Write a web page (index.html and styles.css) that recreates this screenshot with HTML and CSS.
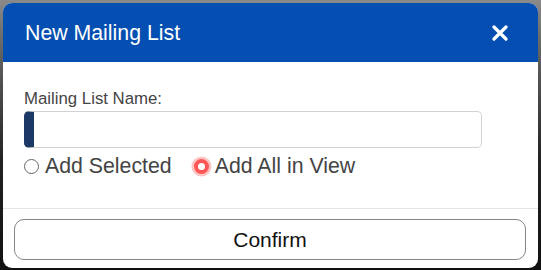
FILE: index.html
```html
<!DOCTYPE html>
<html>
<head>
<meta charset="utf-8">
<link rel="stylesheet" href="styles.css">
</head>
<body>
<div class="dialog">
  <div class="header">
    <span class="title">New Mailing List</span>
    <span class="close"><svg width="16" height="16" viewBox="0 0 16 16"><path d="M2 2 L14 14 M14 2 L2 14" stroke="#fff" stroke-width="3.2" stroke-linecap="round"/></svg></span>
  </div>
  <div class="body">
    <div class="label">Mailing List Name:</div>
    <div class="input"></div>
    <div class="radios">
      <label class="radio"><span class="dot"></span>Add Selected</label>
      <label class="radio checked"><span class="dot"></span>Add All in View</label>
    </div>
  </div>
  <div class="footer">
    <div class="button">Confirm</div>
  </div>
</div>
</body>
</html>
```
FILE: styles.css
```css
html, body { margin: 0; padding: 0; }
body {
  width: 541px;
  height: 270px;
  background: linear-gradient(180deg, #8a8a8a 0px, #6a6a6a 40px, #222 160px, #111 270px);
  padding: 3px 3px 0 3px;
  box-sizing: border-box;
  font-family: "Liberation Sans", Arial, sans-serif;
  overflow: hidden;
}
.dialog {
  width: 535px;
  height: 265px;
  background: #fff;
  border-radius: 9px;
  overflow: hidden;
  display: flex;
  flex-direction: column;
}
.header {
  height: 59px;
  background: #044fb1;
  display: flex;
  align-items: center;
  justify-content: space-between;
  padding: 0 30px 0 22px;
  box-sizing: border-box;
}
.title {
  color: #fff;
  font-size: 21.3px;
  line-height: 24px;
  padding-top: 1px;
}
.close { display: flex; width: 16px; height: 16px; }
.body {
  padding: 27px 0 30px 21px;
  border-bottom: 1px solid #e6e6e6;
}
.label {
  color: #444;
  font-size: 16.8px;
  line-height: 20px;
}
.input {
  margin-top: 2px;
  width: 458px;
  height: 37px;
  box-sizing: border-box;
  border: 1px solid #d2d2d2;
  border-left: 10px solid #1c3966;
  border-radius: 5px;
}
.radios {
  margin-top: 6px;
  display: flex;
  align-items: center;
  gap: 22px;
  height: 24px;
}
.radio {
  display: flex;
  align-items: center;
  color: #444;
  font-size: 21.3px;
  line-height: 24px;
}
.dot {
  width: 15px;
  height: 15px;
  box-sizing: border-box;
  border: 1px solid #666;
  border-radius: 50%;
  margin-right: 6px;
}
.checked .dot {
  border: 4px solid #ff5757;
  background: #fff;
  box-shadow: 0 0 0 2.5px rgba(255, 90, 90, 0.35);
  margin-right: 6px;
}
.footer {
  padding: 10px 12px 0 11px;
}
.button {
  height: 41px;
  box-sizing: border-box;
  border: 1px solid #858585;
  border-radius: 10px;
  display: flex;
  align-items: center;
  justify-content: center;
  color: #111;
  font-size: 21px;
}
```
